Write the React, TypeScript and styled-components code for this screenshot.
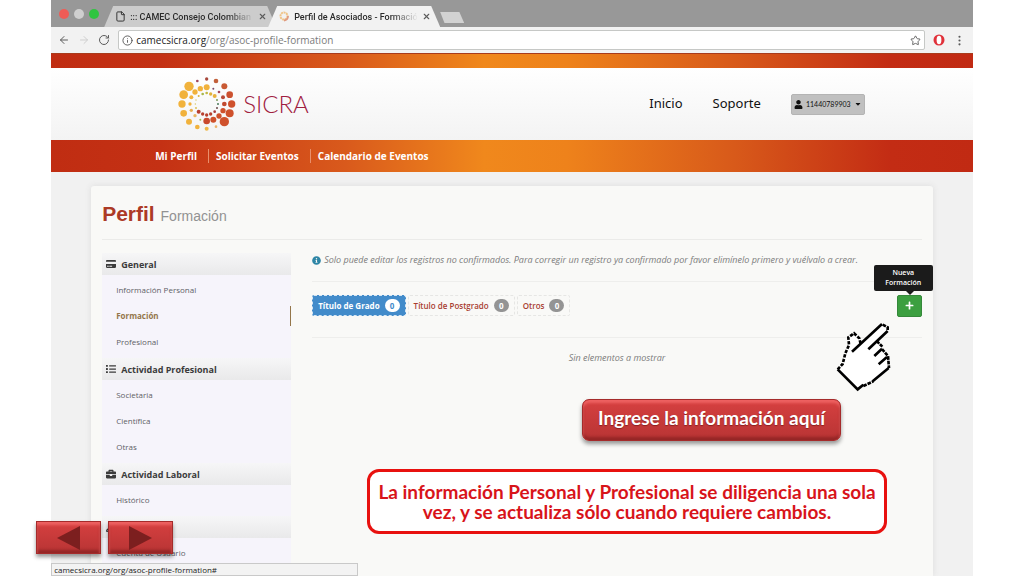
import React from "react";
import styled, { createGlobalStyle, css } from "styled-components";
import { FaUser, FaCreditCard, FaList, FaBriefcase, FaInfoCircle, FaPlus, FaCaretDown, FaWrench } from "react-icons/fa";
import { ArrowLeft, ArrowRight, RotateCw, Info, File, Star, X, EllipsisVertical } from "lucide-react";

const GlobalStyle = createGlobalStyle`
  *, *::before, *::after { box-sizing: border-box; }
  body { margin: 0; background: #fff; font-family: "Open Sans", "Noto Sans", sans-serif; }
  button { font-family: inherit; cursor: pointer; }
  a { color: inherit; text-decoration: none; }
  ul { list-style: none; margin: 0; padding: 0; }
`;

const Slide = styled.div`
  position: relative;
  min-height: 100vh;
  padding: 0 5%;
  display: flex;
`;

const Browser = styled.div`
  flex: 1;
  min-width: 0;
  display: flex;
  flex-direction: column;
  background: #f1f1f1;
`;

const TabStrip = styled.div`
  height: 27px;
  padding: 6px 0 0 8px;
  display: flex;
  align-items: flex-start;
  background: #989898;
`;

const Lights = styled.div`
  display: flex;
  gap: 5px;
  width: 45px;
  padding-top: 3px;
`;

const Light = styled.span<{ $color: string }>`
  width: 10px;
  height: 10px;
  border-radius: 50%;
  background: ${(p) => p.$color};
`;

const BrowserTab = styled.div<{ $active?: boolean }>`
  display: flex;
  align-items: center;
  gap: 4px;
  width: 172px;
  height: 21px;
  padding: 0 9px 0 11px;
  margin-right: -8px;
  font: 500 9px/20px Roboto, sans-serif;
  color: #2b2b2b;
  background: ${(p) => (p.$active ? "#f2f2f2" : "#cccccc")};
  clip-path: polygon(9px 0, calc(100% - 9px) 0, 100% 100%, 0 100%);
`;

const TabTitle = styled.span`
  flex: 1;
  min-width: 0;
  overflow: hidden;
  white-space: nowrap;
  mask-image: linear-gradient(to right, #000 78%, transparent);
`;

const PlainButton = styled.button`
  display: flex;
  padding: 0;
  border: 0;
  background: none;
  color: #5c5c5c;
`;

const NewTab = styled.button`
  width: 24px;
  height: 11px;
  margin: 6px 0 0 8px;
  padding: 0;
  border: 0;
  background: #d2d2d2;
  clip-path: polygon(0 0, 80% 0, 100% 100%, 18% 100%);
`;

const Toolbar = styled.div`
  height: 26px;
  display: flex;
  align-items: center;
  gap: 8px;
  padding: 0 7px;
  background: #f2f2f2;
`;

const AddressBar = styled.div`
  flex: 1;
  display: flex;
  align-items: center;
  gap: 3px;
  height: 20px;
  padding: 0 3px;
  border: 1px solid #c6c8c6;
  border-radius: 2px;
  background: #fff;
  color: #555;
`;

const AddressText = styled.div`
  flex: 1;
  font: 10px/18px "Open Sans", sans-serif;
  color: #7b7b7b;
  b { font-weight: 400; color: #222; }
`;

const flame = css`
  background: linear-gradient(90deg, #c02d12 0%, #c43114 12%, #d95a1c 32%, #f0881c 47%, #ee821b 56%, #d85a1a 74%, #c32c14 91%, #c12a13 100%);
`;

const Stripe = styled.div`
  ${flame}
  height: 15px;
  border-top: 1px solid #a83b1c;
`;

const SiteHeader = styled.header`
  height: 72px;
  display: flex;
  align-items: center;
  padding: 0 108px 0 127px;
  background: linear-gradient(#ffffff, #f3f3f3);
`;

const Brand = styled.a`
  display: flex;
  align-items: center;
  gap: 6px;
  margin-right: auto;
  font: 300 24px/30px Lato, sans-serif;
  color: #a02040;
`;

const TopLink = styled.a`
  margin-right: 30px;
  padding-bottom: 2px;
  font: 13px/20px "Noto Sans", sans-serif;
  color: #111;
`;

const UserButton = styled.button`
  display: flex;
  align-items: center;
  justify-content: center;
  gap: 3px;
  width: 74px;
  height: 21px;
  padding: 0;
  border: 1px solid #b4b4b4;
  border-radius: 2px;
  background: #c0c0c0;
  font: 7px/10px Lato, sans-serif;
  color: #111;
`;

const MainNav = styled.nav`
  ${flame}
  height: 32px;
  display: flex;
  align-items: center;
  padding-left: 104px;
`;

const NavLink = styled.a`
  font: 700 10px/14px "Open Sans", sans-serif;
  color: #fff;
  & + & {
    margin-left: 11px;
    padding-left: 7px;
    border-left: 1px solid #e98f6c;
  }
`;

const Card = styled.main`
  flex: 1;
  margin: 14px 40px 0;
  padding: 12px 11px 0;
  border-radius: 3px 3px 0 0;
  background: #f9f9f7;
  box-shadow: 0 0 6px #dcdcdc;
`;

const PageTitle = styled.h1`
  margin: 0;
  padding-bottom: 7px;
  border-bottom: 1px solid #ebebe9;
  font: 700 21px/31px "Liberation Sans", sans-serif;
  color: #ac3a26;
  small {
    font-size: 14px;
    font-weight: 400;
    color: #929292;
  }
`;

const Columns = styled.div`
  display: grid;
  grid-template-columns: 189px 1fr;
  gap: 21px;
  padding-top: 13px;
`;

const GroupTitle = styled.h2`
  display: flex;
  align-items: center;
  gap: 5px;
  height: 22px;
  margin: 0;
  padding-left: 4px;
  background: linear-gradient(#f6f6f7, #e9e9ea);
  font-size: 9px;
  font-weight: 700;
  color: #3b3b3b;
`;

const GroupList = styled.ul`
  padding: 2px 0 3px;
  background: #f6f4fb;
`;

const GroupItem = styled.li<{ $active?: boolean }>`
  height: 26px;
  padding: 3px 0;
  a {
    display: block;
    padding-left: 14px;
    font-size: 8px;
    line-height: 20px;
    font-weight: ${(p) => (p.$active ? 700 : 400)};
    color: ${(p) => (p.$active ? "#94764a" : "#5f5f66")};
    border-right: 1px solid ${(p) => (p.$active ? "#94764a" : "transparent")};
  }
`;

const Note = styled.p`
  display: flex;
  align-items: center;
  gap: 3px;
  margin: 0;
  padding-bottom: 14px;
  border-bottom: 1px solid #eeeeec;
  font: italic 400 9px/14px "Open Sans", sans-serif;
  color: #7c7c7c;
`;

const DegreeRow = styled.div`
  display: flex;
  align-items: center;
  height: 56px;
  padding-bottom: 8px;
  border-bottom: 1px solid #eeeeec;
`;

const DegreeTab = styled.button<{ $active?: boolean }>`
  display: flex;
  align-items: center;
  gap: 5px;
  height: 21px;
  padding: 0 5px;
  margin-right: 2px;
  border: 1px dashed ${(p) => (p.$active ? "#d5e6f4" : "#e6e6e4")};
  border-radius: 2px;
  background: ${(p) => (p.$active ? "#428bca" : "transparent")};
  font-size: 8px;
  font-weight: ${(p) => (p.$active ? 700 : 600)};
  color: ${(p) => (p.$active ? "#fff" : "#a83d31")};
  span {
    width: 15px;
    border-radius: 7px;
    font-size: 8px;
    line-height: 13px;
    font-weight: 700;
    background: ${(p) => (p.$active ? "#fff" : "#949494")};
    color: ${(p) => (p.$active ? "#428bca" : "#fff")};
  }
`;

const AddWrap = styled.div`
  position: relative;
  margin-left: auto;
`;

const AddButton = styled.button`
  display: flex;
  align-items: center;
  justify-content: center;
  width: 25px;
  height: 22px;
  padding: 0;
  border: 1px solid #35893a;
  border-radius: 2px;
  background: #3c9f40;
  color: #fff;
`;

const Tooltip = styled.div`
  position: absolute;
  right: -11px;
  bottom: 26px;
  width: 59px;
  padding: 3px 0;
  border-radius: 2px;
  background: #1b1b1b;
  font-size: 7px;
  line-height: 10px;
  font-weight: 600;
  text-align: center;
  color: #fff;
  &::after {
    content: "";
    position: absolute;
    top: 100%;
    left: 50%;
    margin-left: 3px;
    border: 4px solid transparent;
    border-top-color: #1b1b1b;
    border-bottom: 0;
  }
`;

const Empty = styled.p`
  margin: 13px 0 0;
  font: italic 400 9px/14px "Open Sans", sans-serif;
  text-align: center;
  color: #7c7c7c;
`;

const StatusBar = styled.div`
  position: absolute;
  left: 5%;
  bottom: 0;
  width: 307px;
  height: 13px;
  padding-left: 2px;
  border: 1px solid #c9c9c9;
  background: #f3f3f3;
  font: 8px/11px "Open Sans", sans-serif;
  color: #222;
`;

const redBevel = css`
  border: 1px solid #a52b2b;
  background: linear-gradient(#d64040, #b83434);
  box-shadow: inset 0 3px 3px #ee6262, inset 0 -3px 3px #942626, 0 3px 4px rgba(0, 0, 0, 0.4);
`;

const Callout = styled.button`
  ${redBevel}
  position: absolute;
  right: 183px;
  top: 399px;
  width: 259px;
  height: 42px;
  padding: 0 0 4px;
  border-radius: 7px;
  font: 700 19px/24px Lato, sans-serif;
  color: #fff;
  text-shadow: 0 1px 1px #8a2020;
  white-space: nowrap;
`;

const Notice = styled.p`
  position: absolute;
  right: 137px;
  top: 469px;
  width: 520px;
  margin: 0;
  padding: 10px 4px 9px;
  border: 3px solid #e8110f;
  border-radius: 12px;
  background: #fff;
  font: 700 19px/20px Lato, sans-serif;
  text-align: center;
  color: #d8141a;
`;

const HandIcon = styled.svg`
  position: absolute;
  right: 133px;
  top: 322px;
`;

const SlideNav = styled.nav`
  position: absolute;
  left: 36px;
  bottom: 22px;
  display: flex;
  gap: 7px;
`;

const SlideButton = styled.button`
  ${redBevel}
  display: flex;
  align-items: center;
  justify-content: center;
  width: 65px;
  height: 33px;
  padding: 0;
`;

const dots: [number, number, number, string][] = [
  [141, 43, 5, "#a8483c"], [169, 49, 7, "#c2603a"], [194, 65, 9, "#c95a34"], [210, 90, 10, "#cc5230"],
  [216, 118, 11, "#cf512c"], [210, 146, 12, "#cf512c"], [194, 171, 14, "#cf512c"], [169, 186, 4, "#eeb36a"],
  [141, 192, 6, "#efb84a"], [113, 187, 7, "#f1b23c"], [88, 171, 9, "#f1b23c"], [72, 146, 10, "#f1b23c"],
  [67, 118, 11, "#f1b23c"], [72, 90, 13, "#f1b23c"], [88, 65, 14, "#f1b23c"], [113, 49, 4, "#a0455a"],
  [141, 68, 9, "#f1b23c"], [122, 72, 8, "#f1b23c"], [106, 82, 8, "#f1b23c"], [95, 98, 6, "#f1b23c"],
  [91, 118, 5, "#f1b23c"], [95, 137, 5, "#e9ae52"], [106, 153, 5, "#e9b862"], [122, 165, 3, "#a6b84a"],
  [141, 169, 10, "#c9492e"], [161, 165, 9, "#cf512c"], [178, 154, 8, "#cf512c"], [190, 138, 8, "#cf512c"],
  [194, 118, 7, "#c24a30"], [190, 98, 6, "#b84a38"], [178, 82, 4, "#a84a58"], [161, 72, 3, "#7a4a68"],
  [141, 85, 4, "#c3b840"], [153, 88, 5, "#e0b23c"], [165, 94, 6, "#e9b23c"], [172, 106, 3, "#7a9a5a"],
  [175, 118, 3, "#4a7a5a"], [172, 130, 3, "#6a4a4a"], [165, 141, 4, "#a83a3a"], [153, 148, 5, "#b8402e"],
  [141, 151, 5, "#b8402e"], [129, 148, 5, "#b8402e"], [117, 141, 6, "#b8402e"], [109, 130, 3, "#d8c25a"],
  [107, 118, 2, "#d8c25a"], [109, 106, 2, "#d8c25a"], [117, 94, 3, "#d8b23c"], [129, 88, 4, "#a8b84a"],
];

const LogoMark = () => (
  <svg width="59" height="56" viewBox="55 34 177 168" aria-hidden="true">
    {dots.map(([x, y, r, color]) => (
      <circle key={`${x}-${y}`} cx={x} cy={y} r={r} fill={color} />
    ))}
  </svg>
);

const TabLogo = () => (
  <svg width="11" height="11" viewBox="0 0 11 11" aria-hidden="true">
    <circle cx="5" cy="5" r="3.5" fill="none" stroke="#f0c487" strokeWidth="2" strokeDasharray="2 .6" />
    <path d="M5 9.5 Q9 9 9 5" fill="none" stroke="#e09a80" strokeWidth="1.8" />
  </svg>
);

const groups = [
  { title: "General", Icon: FaCreditCard, items: ["Información Personal", "Formación", "Profesional"] },
  { title: "Actividad Profesional", Icon: FaList, items: ["Societaria", "Científica", "Otras"] },
  { title: "Actividad Laboral", Icon: FaBriefcase, items: ["Histórico"] },
  { title: "", Icon: FaWrench, items: ["Cuenta de Usuario"] },
];

const degrees = ["Título de Grado", "Título de Postgrado", "Otros"];

export default function App() {
  return (
    <>
      <GlobalStyle />
      <Slide>
        <Browser>
          <TabStrip>
            <Lights>
              <Light $color="#ee5c56" />
              <Light $color="#cfcfcf" />
              <Light $color="#2fc440" />
            </Lights>
            <BrowserTab>
              <File size={11} />
              <TabTitle>::: CAMEC Consejo Colombian</TabTitle>
              <PlainButton aria-label="Cerrar pestaña"><X size={9} strokeWidth={3} /></PlainButton>
            </BrowserTab>
            <BrowserTab $active>
              <TabLogo />
              <TabTitle>Perfil de Asociados - Formació</TabTitle>
              <PlainButton aria-label="Cerrar pestaña"><X size={9} strokeWidth={3} /></PlainButton>
            </BrowserTab>
            <NewTab aria-label="Nueva pestaña" />
          </TabStrip>
          <Toolbar>
            <PlainButton aria-label="Atrás"><ArrowLeft size={12} /></PlainButton>
            <PlainButton aria-label="Adelante"><ArrowRight size={12} color="#cfcfcf" /></PlainButton>
            <PlainButton aria-label="Recargar"><RotateCw size={12} /></PlainButton>
            <AddressBar>
              <Info size={11} />
              <AddressText><b>camecsicra.org</b>/org/asoc-profile-formation</AddressText>
              <PlainButton aria-label="Marcador"><Star size={11} /></PlainButton>
            </AddressBar>
            <svg width="12" height="12" viewBox="0 0 12 12" role="img" aria-label="Opera">
              <circle cx="6" cy="6" r="5.5" fill="#e0313a" />
              <ellipse cx="6" cy="6" rx="2.4" ry="4.2" fill="#fff" />
            </svg>
            <PlainButton aria-label="Menú"><EllipsisVertical size={13} /></PlainButton>
          </Toolbar>
          <Stripe />
          <SiteHeader>
            <Brand href="#"><LogoMark />SICRA</Brand>
            <TopLink href="#">Inicio</TopLink>
            <TopLink href="#">Soporte</TopLink>
            <UserButton><FaUser size={9} />11440789903<FaCaretDown size={8} /></UserButton>
          </SiteHeader>
          <MainNav>
            <NavLink href="#">Mi Perfil</NavLink>
            <NavLink href="#">Solicitar Eventos</NavLink>
            <NavLink href="#">Calendario de Eventos</NavLink>
          </MainNav>
          <Card>
            <PageTitle>Perfil <small>Formación</small></PageTitle>
            <Columns>
              <aside>
                {groups.map(({ title, Icon, items }) => (
                  <section key={items[0]}>
                    <GroupTitle><Icon size={10} />{title}</GroupTitle>
                    <GroupList>
                      {items.map((item) => (
                        <GroupItem key={item} $active={item === "Formación"}><a href="#">{item}</a></GroupItem>
                      ))}
                    </GroupList>
                  </section>
                ))}
              </aside>
              <section>
                <Note>
                  <FaInfoCircle size={9} color="#2f86a6" />
                  Solo puede editar los registros no confirmados. Para corregir un registro ya confirmado por favor elimínelo primero y vuélvalo a crear.
                </Note>
                <DegreeRow>
                  {degrees.map((label, i) => (
                    <DegreeTab key={label} $active={i === 0}>{label}<span>0</span></DegreeTab>
                  ))}
                  <AddWrap>
                    <Tooltip role="tooltip">Nueva Formación</Tooltip>
                    <AddButton aria-label="Nueva Formación"><FaPlus size={9} /></AddButton>
                  </AddWrap>
                </DegreeRow>
                <Empty>Sin elementos a mostrar</Empty>
              </section>
            </Columns>
          </Card>
        </Browser>
        <StatusBar>camecsicra.org/org/asoc-profile-formation#</StatusBar>
        <HandIcon width="55" height="70" viewBox="50 216 165 210" aria-hidden="true">
          <path
            d="M100 305 L188 222 L205 232 V245 L172 275 L187 292 L205 322 L208 355 L160 392 L115 418 L55 358 L70 340 L78 310 L88 285 L85 262 L104 248 L122 265 L125 280Z"
            fill="#fff"
          />
          <g fill="none" stroke="#000" strokeWidth="8">
            <path d="M98 305 L188 222 M147 298 L205 243 M55 358 L115 418 L132 404 M160 394 L208 354 M165 318 L188 296 M178 343 L203 321" />
            <path d="M190 224 L205 232 V243 M172 273 L189 290 M188 297 L206 318 L209 354 M132 408 L162 394" strokeDasharray="11 3" />
            <path d="M55 358 L70 342 L78 310 L89 285 L87 262 L104 250 L120 265 L124 282" strokeDasharray="10 4" />
          </g>
        </HandIcon>
        <Callout>Ingrese la información aquí</Callout>
        <Notice>La información Personal y Profesional se diligencia una sola vez, y se actualiza sólo cuando requiere cambios.</Notice>
        <SlideNav aria-label="Diapositivas">
          <SlideButton aria-label="Anterior">
            <svg width="23" height="24" viewBox="0 0 23 24"><path d="M0 12 L23 0 V24Z" fill="#7c1f1f" /></svg>
          </SlideButton>
          <SlideButton aria-label="Siguiente">
            <svg width="23" height="24" viewBox="0 0 23 24"><path d="M23 12 L0 0 V24Z" fill="#7c1f1f" /></svg>
          </SlideButton>
        </SlideNav>
      </Slide>
    </>
  );
}
